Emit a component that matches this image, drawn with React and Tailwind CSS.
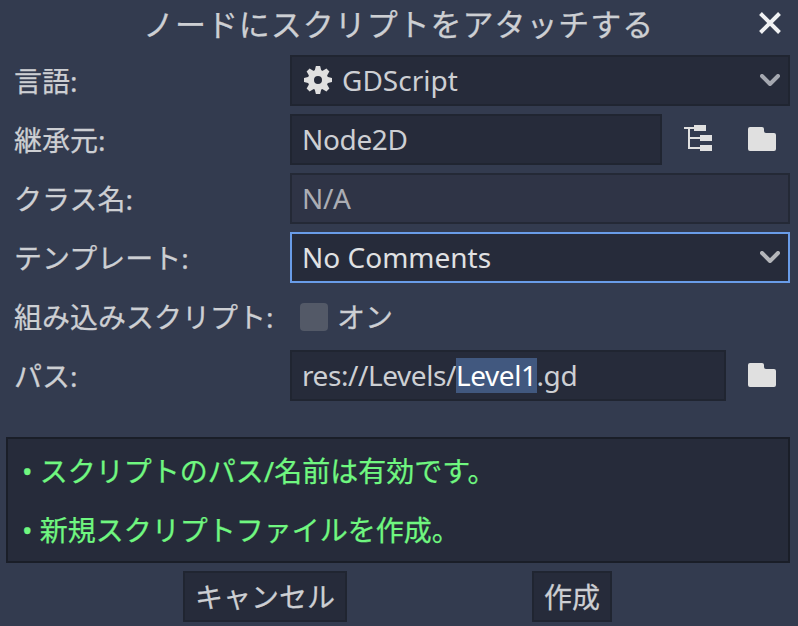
const JP = "font-['Noto_Sans','Noto_Sans_CJK_JP',sans-serif]";

const bold = "[-webkit-text-stroke:0.25px_currentColor]";

function Label({ children }) {
  return <div className={`${bold} w-[282px] shrink-0 whitespace-nowrap pl-[6px] pt-px`}>{children}</div>;
}

function Row({ label, children }) {
  return (
    <div className="flex h-[51px] items-center">
      <Label>{label}</Label>
      {children}
    </div>
  );
}

function Chevron({ color }) {
  return (
    <svg className="shrink-0" width="20" height="12" viewBox="0 0 20 12" fill="none">
      <path d="M2 2l8 8 8-8" stroke={color} strokeWidth="4" strokeLinecap="round" strokeLinejoin="round" />
    </svg>
  );
}

function Folder() {
  return (
    <svg width="28" height="24" viewBox="0 0 28 24" fill="#e0e0e0">
      <path d="M2 0h12a2 2 0 0 1 2 2v2a2 2 0 0 0 2 2h8a2 2 0 0 1 2 2v14a2 2 0 0 1-2 2H2a2 2 0 0 1-2-2V2a2 2 0 0 1 2-2z" />
    </svg>
  );
}

function Tree() {
  return (
    <svg className="mb-px" width="28" height="26" viewBox="0 0 28 26" fill="#e0e0e0">
      <path d="M0 2h10V0h12v6H10V4H6v8h10v-2h12v6H16v-2H6v8h10v-2h12v6H16v-2H4V4H0z" />
    </svg>
  );
}

function Gear() {
  const teeth = [0, 45, 90, 135, 180, 225, 270, 315];
  return (
    <svg width="28" height="28" viewBox="0 0 28 28" fill="#e0e0e0">
      {teeth.map((a) => (
        <path key={a} d="M11.9 0h4.2l1.5 6h-7.2z" transform={`rotate(${a} 14 14)`} />
      ))}
      <circle cx="14" cy="14" r="7.1" fill="none" stroke="#e0e0e0" strokeWidth="6.2" />
    </svg>
  );
}

const field = "flex h-[51px] items-center border-2 border-[#202531] bg-[#262b3a] pl-[10px] pb-px";

export default function App() {
  return (
    <div className={`${JP} flex h-[626px] w-[798px] flex-col overflow-hidden bg-[#333b4f] pl-2 pr-2 text-[28px] leading-[38px] text-[#cdcfd3]`} lang="ja">
      <header className="flex h-[55px] items-start">
        <div className="w-[135px] shrink-0" />
        <h1 className={`${bold} w-[521px] shrink-0 whitespace-nowrap text-[31px] leading-[48px] tracking-[0.95px]`}>ノードにスクリプトをアタッチする</h1>
        <svg className="ml-[95px] mt-[12px] shrink-0" width="22" height="22" viewBox="0 0 22 22" fill="none">
          <path d="M1.5 1.5l19 19M20.5 1.5l-19 19" stroke="#f0f1f3" strokeWidth="4" />
        </svg>
      </header>
      <main className="flex flex-col gap-2">
        <Row label="言語:">
          <div className={`${field} flex-1 justify-between pr-2`}>
            <span className="flex items-center gap-[10px] pl-[2px]"><Gear />GDScript</span>
            <Chevron color="#a5a8b0" />
          </div>
        </Row>
        <Row label="継承元:">
          <div className={`${field} w-[372px] tracking-[-0.35px]`}>Node2D</div>
          <div className="flex flex-1 items-center justify-between pb-[2px] pl-[22px] pr-[14px]"><Tree /><Folder /></div>
        </Row>
        <Row label="クラス名:">
          <div className="flex h-[51px] flex-1 items-center border-2 border-[#242936] bg-[#2f3446] pb-px pl-[10px] tracking-[-0.3px] text-[#abadb4]">N/A</div>
        </Row>
        <Row label="テンプレート:">
          <div className="flex h-[51px] flex-1 items-center justify-between border-2 border-[#699ce8] bg-[#262b3a] pb-px pl-[10px] pr-2 text-[#e0e1e3]">
            <span>No Comments</span>
            <Chevron color="#b4b6ba" />
          </div>
        </Row>
        <Row label="組み込みスクリプト:">
          <span className="ml-[10px] mr-[9px] size-7 rounded bg-[#535967]" />
          <span className={bold}>オン</span>
        </Row>
        <Row label="パス:">
          <div className={`${field} w-[436px] whitespace-pre tracking-[-0.43px]`}>
            res://Levels/<span className="h-[35px] bg-[#41587f] leading-[35px] text-white">Level1</span>.gd
          </div>
          <div className="flex flex-1 justify-end pb-[2px] pr-[14px]"><Folder /></div>
        </Row>
      </main>
      <section className={`${bold} -ml-[2px] mt-[36px] flex h-[126px] shrink-0 flex-col justify-center gap-[21px] border-2 border-[#1a1e28] bg-[#262b3a] pl-[14px] text-[#70f780]`}>
        <p>• スクリプトのパス/名前は有効です。</p>
        <p>• 新規スクリプトファイルを作成。</p>
      </section>
      <footer className={`${bold} mt-2 flex shrink-0 gap-[185px] pl-[175px]`}>
        <button className="h-[51px] w-[164px] border-2 border-[#202531] bg-[#262b3a]">キャンセル</button>
        <button className="h-[51px] w-[80px] border-2 border-[#202531] bg-[#262b3a]">作成</button>
      </footer>
    </div>
  );
}
